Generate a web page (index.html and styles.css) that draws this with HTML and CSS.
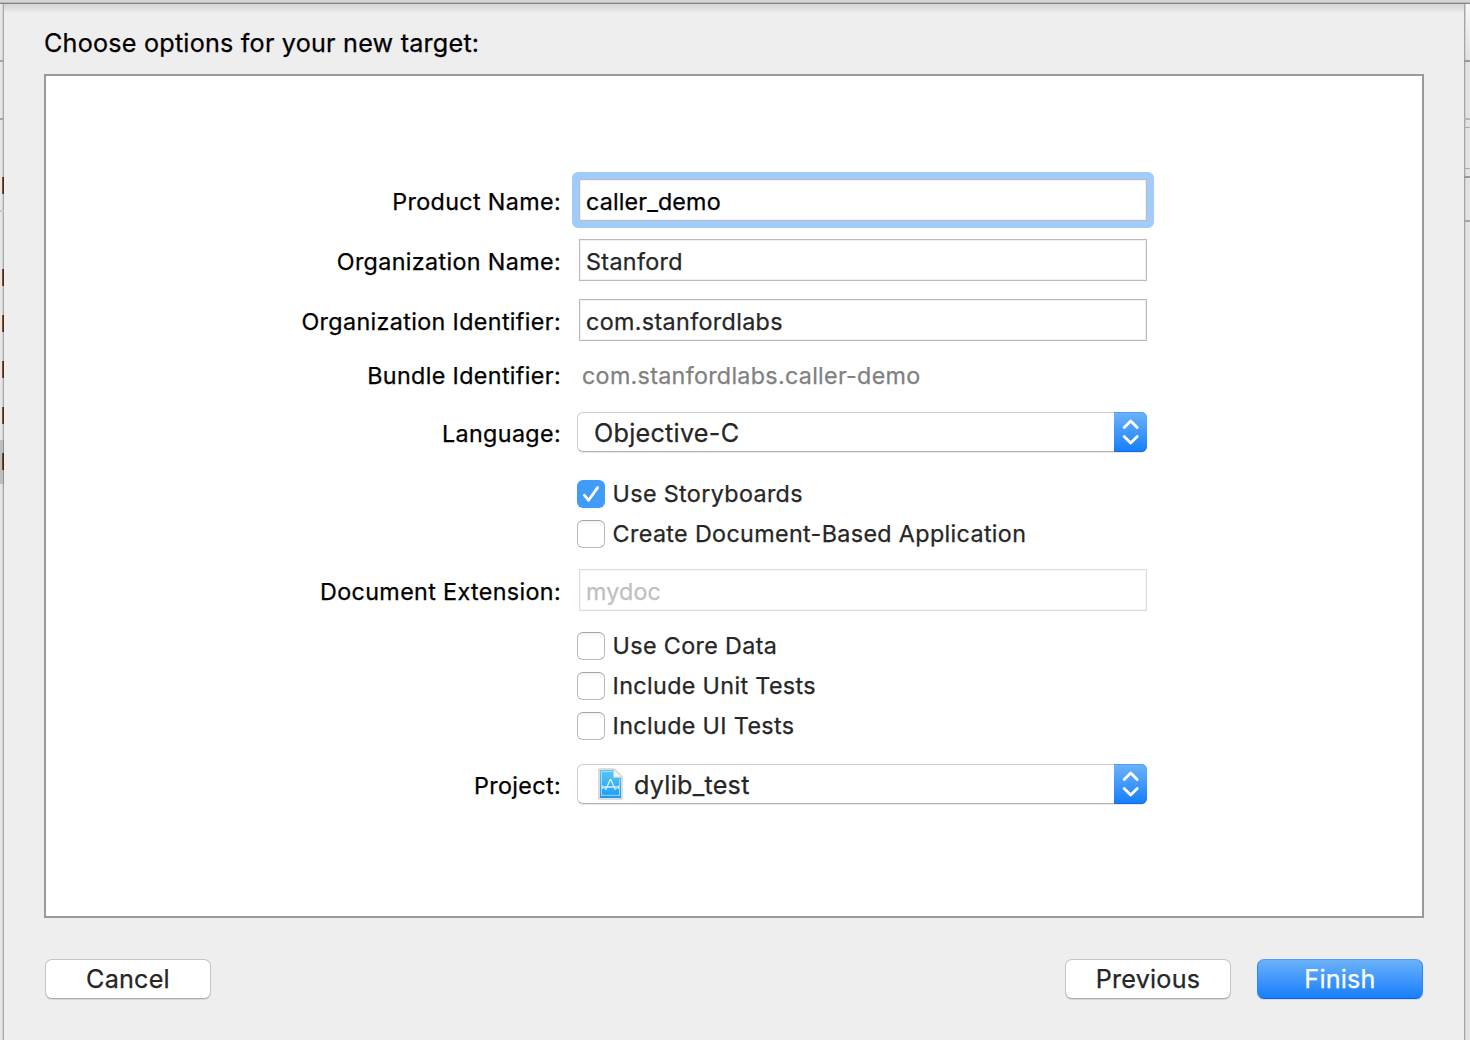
FILE: index.html
```html
<!DOCTYPE html>
<html lang="en">
<head>
<meta charset="utf-8">
<title>New Target</title>
<link rel="stylesheet" href="styles.css">
</head>
<body>
<div class="window">
  <div class="toolbar-edge"></div>
  <div class="gutter-left"></div>
  <main class="sheet">
    <h1 class="title">Choose options for your new target:</h1>
    <section class="panel">
      <div class="row row-product">
        <div class="label">Product Name:</div>
        <div class="field focused tight">caller_demo</div>
      </div>
      <div class="row row-org">
        <div class="label">Organization Name:</div>
        <div class="field">Stanford</div>
      </div>
      <div class="row row-org">
        <div class="label">Organization Identifier:</div>
        <div class="field">com.stanfordlabs</div>
      </div>
      <div class="row row-bundle">
        <div class="label">Bundle Identifier:</div>
        <div class="value">com.stanfordlabs.caller-demo</div>
      </div>
      <div class="row row-language">
        <div class="label">Language:</div>
        <div class="select">
          <span class="select-text">Objective-C</span>
          <span class="stepper"><svg width="33" height="40" viewBox="0 0 33 40"><path d="M10.2 15.6 16.7 9l6.5 6.6M10.2 24.4l6.5 6.6 6.5-6.6"/></svg></span>
        </div>
      </div>
      <div class="row row-storyboards">
        <div class="check"><span class="box checked"><svg width="28" height="28" viewBox="0 0 28 28"><path d="M7.3 15.2 11.6 20.3 20.6 7.6"/></svg></span>Use Storyboards</div>
      </div>
      <div class="row row-check">
        <div class="check"><span class="box"></span>Create Document-Based Application</div>
      </div>
      <div class="row row-extension">
        <div class="label">Document Extension:</div>
        <div class="field disabled tight">mydoc</div>
      </div>
      <div class="row row-coredata">
        <div class="check"><span class="box"></span>Use Core Data</div>
      </div>
      <div class="row row-check">
        <div class="check"><span class="box"></span>Include Unit Tests</div>
      </div>
      <div class="row row-check">
        <div class="check"><span class="box"></span>Include UI Tests</div>
      </div>
      <div class="row row-project">
        <div class="label">Project:</div>
        <div class="select">
          <svg class="doc-icon" width="26" height="34" viewBox="0 0 26 34">
            <defs><linearGradient id="doc" x1="0" y1="0" x2="0" y2="1"><stop offset="0" stop-color="#5cc6f8"/><stop offset="1" stop-color="#1c9af5"/></linearGradient></defs>
            <path d="M1 2h15.500l7.500 7.500V32H1z" fill="#fff" stroke="#b9b9b9"/>
            <path d="M2 3h13.500v7.500h7.500V31H2z" fill="url(#doc)"/>
            <path d="M3.500 29V4.500H14M21.500 12v17M3.500 28.300h18" fill="none" stroke="#a9defb" stroke-width=".9"/>
            <path d="M16 2.500V10h7.500z" fill="#f4f4f4" stroke="#ccc" stroke-width=".6"/>
            <path d="M12.500 12 7.500 23M12.500 12l5 11M5.500 20h14" fill="none" stroke="#d4f0ff" stroke-width="1.400"/>
            <path d="M4.500 18.500l2 3.500M4.500 18.500v3.500M20.500 18.500l-2 3.500M20.500 18.500v3.500" fill="none" stroke="#b9e5fe" stroke-width="1"/>
          </svg>
          <span class="select-text">dylib_test</span>
          <span class="stepper"><svg width="33" height="40" viewBox="0 0 33 40"><path d="M10.2 15.6 16.7 9l6.5 6.6M10.2 24.4l6.5 6.6 6.5-6.6"/></svg></span>
        </div>
      </div>
    </section>
    <footer class="actions">
      <button class="button">Cancel</button>
      <span class="spacer"></span>
      <button class="button">Previous</button>
      <button class="button primary">Finish</button>
    </footer>
  </main>
  <div class="gutter-right"></div>
</div>
</body>
</html>
```
FILE: styles.css
```css
* { box-sizing: border-box; }

body {
  margin: 0;
  background: #eee;
  color: #000;
  font-family: Inter, "Liberation Sans", sans-serif;
  font-size: 23.3px;
  letter-spacing: 0.36px;
  white-space: nowrap;
  -webkit-text-stroke: 0.25px;
}

svg { display: block; }

.window {
  display: grid;
  grid-template: 4px 1036px / 4px 1460px 6px;
  width: 1470px;
  height: 1040px;
  overflow: hidden;
}

.toolbar-edge {
  grid-column: 1 / -1;
  background: linear-gradient(#d4d4d4 0 2px, #b9b9b9 2px 3px, #868686 3px 4px);
}

/* Slivers of the project window visible beside the sheet */
.gutter-left {
  background:
    linear-gradient(#a5a5a5, #a5a5a5) 0 56px / 4px 2px,
    linear-gradient(#a5a5a5, #a5a5a5) 0 114px / 4px 2px,
    linear-gradient(#c8c8c8, #c8c8c8) 0 206px / 4px 2px,
    linear-gradient(90deg, #8a4b25 50%, #3e2a20 50%) 2px 173px / 2px 17px,
    linear-gradient(90deg, #8a4b25 50%, #3e2a20 50%) 2px 265px / 2px 17px,
    linear-gradient(90deg, #8a4b25 50%, #3e2a20 50%) 2px 311px / 2px 17px,
    linear-gradient(90deg, #8a4b25 50%, #3e2a20 50%) 2px 357px / 2px 17px,
    linear-gradient(90deg, #8a4b25 50%, #3e2a20 50%) 2px 403px / 2px 17px,
    linear-gradient(90deg, #7a4526 50%, #3a2820 50%) 2px 449px / 2px 17px,
    linear-gradient(90deg, #bdbdbd 0 3px, #8f8f8f 3px) 0 436px / 4px 44px,
    linear-gradient(90deg, #e6e6e6 0 2px, #d2d2d2 2px 3px, #a8a8a8 3px);
  background-repeat: no-repeat;
}

.gutter-right {
  background:
    linear-gradient(#999, #999) 0 56px / 6px 2px,
    linear-gradient(#b5b5b5, #b5b5b5) 0 114px / 6px 2px,
    linear-gradient(#aaa, #aaa) 0 123px / 6px 1px,
    linear-gradient(#aaa, #aaa) 0 164px / 6px 1px,
    linear-gradient(#999, #999) 0 172px / 6px 2px,
    linear-gradient(#a5a5a5, #a5a5a5) 0 216px / 6px 2px,
    linear-gradient(90deg, #a6a6a6 0 1px, #cfcfcf 1px 2px, transparent 2px),
    linear-gradient(#f8f8f8, #e3e3e3 50px);
  background-repeat: no-repeat;
}

.sheet {
  display: flex;
  flex-direction: column;
  padding: 0 40px;
  background: linear-gradient(#d3d3d3, #eaeaea 8px, #eee 8px);
}

.title {
  height: 70px;
  margin: 0;
  padding-top: 8px;
  font-size: 25.2px;
  font-weight: 400;
  letter-spacing: 0.2px;
  line-height: 62px;
}

.panel {
  height: 844px;
  padding-top: 103px;
  border: 2px solid #999;
  background: #fff;
}

.row {
  display: grid;
  grid-template-columns: 515px 570px;
  column-gap: 16px;
  align-items: center;
  height: 42px;
}

.row-org { margin-top: 18px; }
.row-bundle { height: 40px; margin-top: 14px; }
.row-language { height: 40px; margin-top: 17px; }
.row-storyboards { height: 28px; margin-top: 28px; }
.row-check { height: 28px; margin-top: 12px; }
.row-extension { margin-top: 21px; }
.row-coredata { height: 28px; margin-top: 21px; }
.row-project { height: 40px; margin-top: 24px; }

.label {
  padding-top: 3px;
  text-align: right;
}

.row-bundle .label,
.value { padding-top: 1px; }

.field {
  height: 42px;
  margin-left: 2px;
  padding: 3px 0 0 6px;
  border: 1px solid #bababa;
  box-shadow: inset 0 0 0 1px #f0f0f0;
  color: #262626;
  line-height: 38px;
}

.tight { letter-spacing: 0.15px; }

.focused {
  position: relative;
  color: #000;
  border-color: #bebebe;
}

/* Focus ring, rounded outside and square inside */
.focused::before {
  content: "";
  position: absolute;
  inset: -8px;
  border: 7px solid #a0cbfb;
  border-radius: 6px;
}

.disabled {
  color: #bfbfbf;
  border-color: #dcdcdc;
  box-shadow: inset 0 0 0 1px #f7f7f7;
}

.value {
  padding-left: 5px;
  color: #808080;
  letter-spacing: 0.3px;
}

.select {
  display: flex;
  align-items: center;
  height: 40px;
  padding-left: 16px;
  border: 1px solid #cecece;
  border-bottom-color: #b4b4b4;
  border-radius: 6px;
  box-shadow: 0 1px 1px rgba(0, 0, 0, 0.1);
  color: #262626;
  font-size: 25.2px;
  letter-spacing: 0.25px;
}

.select-text { padding-top: 2px; }

.stepper {
  height: 40px;
  margin: -1px -1px -1px auto;
  border-radius: 0 6px 6px 0;
  background: linear-gradient(#6cb3fa, #157efb);
  box-shadow: inset 0 1px #4b9ff8, inset 0 -1px #0d6bf5;
}

.stepper path {
  fill: none;
  stroke: #fff;
  stroke-width: 2.8;
  stroke-linecap: round;
  stroke-linejoin: round;
}

.doc-icon { margin: 0 10px 0 4px; }

.check {
  grid-column: 2;
  display: flex;
  align-items: center;
  gap: 7.6px;
  color: #262626;
  line-height: 28px;
}

.box {
  width: 28px;
  height: 28px;
  border: 1px solid #b8b8b8;
  border-top-color: #a6a6a6;
  border-radius: 6px;
  background: linear-gradient(#f3f3f3, #fff 5px);
}

.checked {
  border: 0;
  background: #419bf9;
}

.checked path {
  fill: none;
  stroke: #fff;
  stroke-width: 2.8;
  stroke-linecap: round;
  stroke-linejoin: round;
}

.actions {
  display: flex;
  gap: 26px;
  padding: 41px 1px 0;
}

.spacer { flex: 1; }

.button {
  width: 166px;
  height: 40px;
  padding: 0;
  border: 1px solid #c6c6c6;
  border-bottom-color: #adadad;
  border-radius: 7px;
  box-shadow: 0 1px 1px rgba(0, 0, 0, 0.1);
  background: #fff;
  color: #262626;
  font-family: inherit;
  font-size: 25.2px;
  letter-spacing: 0.2px;
}

.primary {
  border-color: #4c9df6 #2f87f5 #0c62f4;
  background: linear-gradient(#6db3f9, #157dfc) border-box;
  color: #fff;
}
```
